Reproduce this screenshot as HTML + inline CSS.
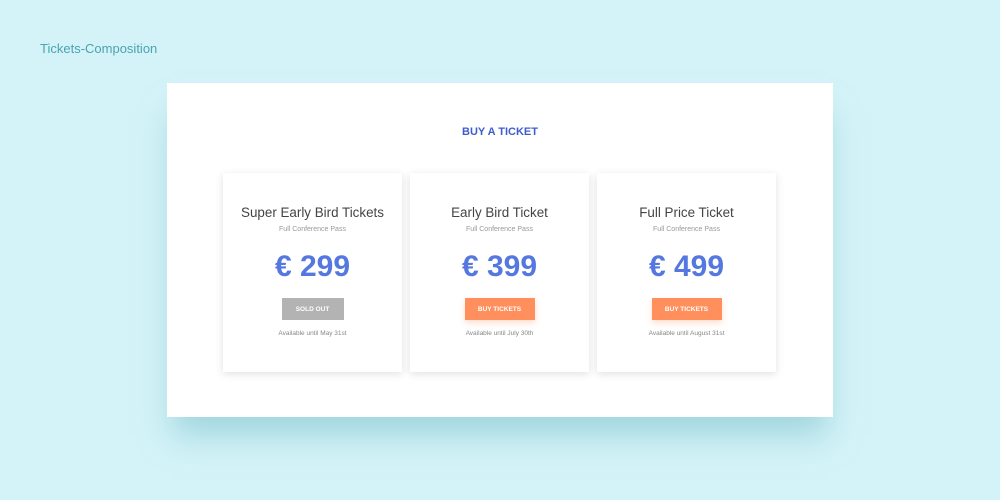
<!DOCTYPE html>
<html><head><meta charset="utf-8"><style>
*{margin:0;padding:0;box-sizing:border-box}
body{width:1000px;height:500px;background:#d3f3f8;font-family:"Liberation Sans",sans-serif;position:relative;overflow:hidden}
.lbl{position:absolute;left:40px;top:41px;font-size:13px;color:#4aa3b0}
.panel{position:absolute;left:167px;top:83px;width:666px;height:334px;background:#fff;box-shadow:0 24px 30px -6px rgba(120,190,200,.55)}
.h{position:absolute;left:0;right:0;top:126px;text-align:center;font-size:11px;font-weight:bold;color:#3f5bd0}
.card{position:absolute;top:173px;width:179px;height:199px;background:#fff;box-shadow:0 2px 8px rgba(0,0,0,.12);text-align:center}
.t{position:absolute;top:32px;left:0;right:0;font-size:13.4px;color:#444}
.s{position:absolute;top:53px;left:0;right:0;font-size:7px;color:#999}
.p{position:absolute;top:77px;left:0;right:0;font-size:30px;font-weight:bold;color:#5578e0}
.b{position:absolute;top:125px;left:50%;transform:translateX(-50%);height:22px;line-height:24px;font-size:6.5px;color:#fff;font-weight:bold}
.so{width:62px;background:#b3b3b3}
.bt{width:70px;background:#ff8f5c;box-shadow:0 3px 6px rgba(255,143,92,.3)}
.a{position:absolute;top:157px;left:0;right:0;font-size:6.5px;color:#888}
</style></head><body>
<div class="lbl">Tickets-Composition</div>
<div class="panel"></div>
<div class="h">BUY A TICKET</div>
<div class="card" style="left:223px"><div class="t">Super Early Bird Tickets</div><div class="s">Full Conference Pass</div><div class="p">€ 299</div><div class="b so">SOLD OUT</div><div class="a">Available until May 31st</div></div>
<div class="card" style="left:410px"><div class="t">Early Bird Ticket</div><div class="s">Full Conference Pass</div><div class="p">€ 399</div><div class="b bt">BUY TICKETS</div><div class="a">Available until July 30th</div></div>
<div class="card" style="left:597px"><div class="t">Full Price Ticket</div><div class="s">Full Conference Pass</div><div class="p">€ 499</div><div class="b bt">BUY TICKETS</div><div class="a">Available until August 31st</div></div>
</body></html>
